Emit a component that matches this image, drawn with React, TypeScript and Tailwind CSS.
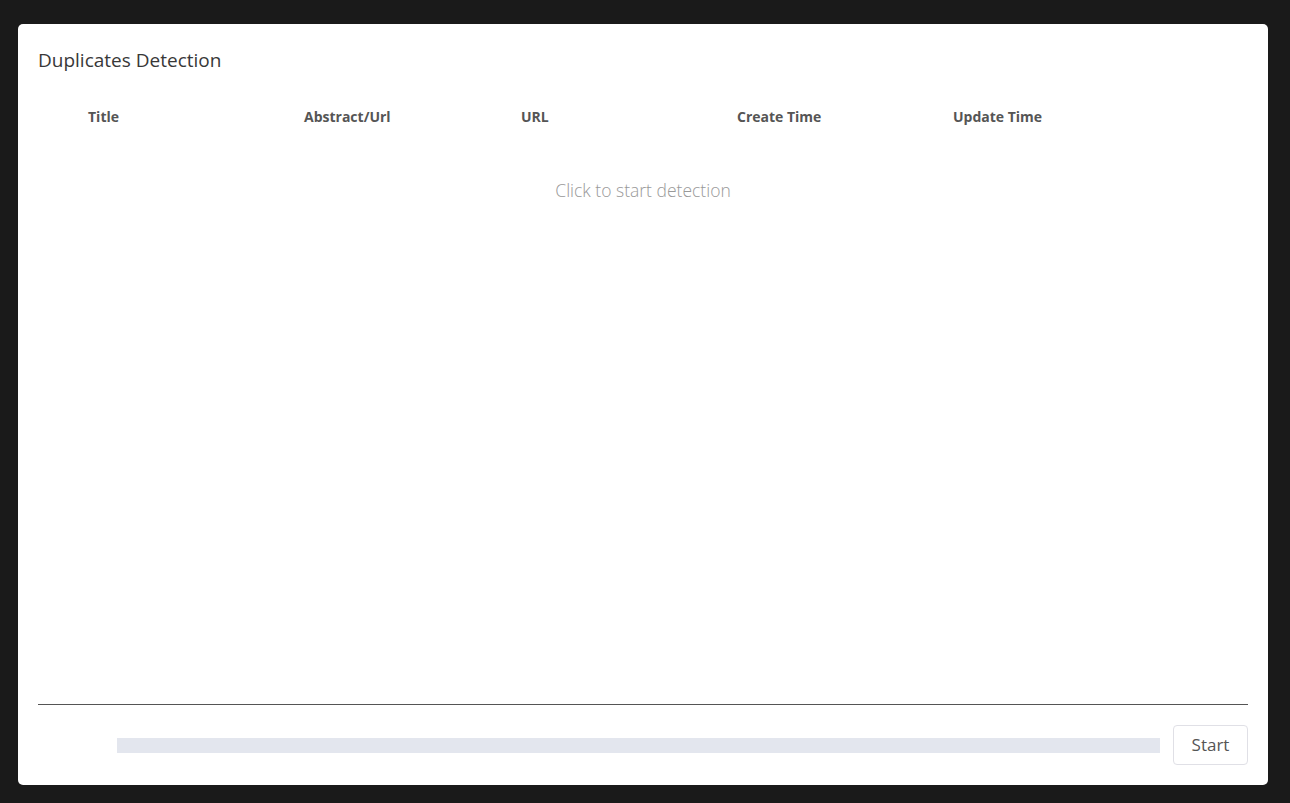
const columns = [
  { label: "Title", width: "w-[216px]" },
  { label: "Abstract/Url", width: "w-[217px]" },
  { label: "URL", width: "w-[216px]" },
  { label: "Create Time", width: "w-[216px]" },
  { label: "Update Time", width: "w-[216px]" },
];

export default function App() {
  return (
    <div className="h-[803px] w-full bg-[#1a1a1a] pl-[18px] pr-[22px] pt-[24px] pb-[18px] font-['Open_Sans','Noto_Sans',sans-serif]">
      <div className="flex h-[761px] flex-col rounded-[5px] bg-white px-5 pt-[22px] pb-5">
        <h2 className="text-[19px] leading-[28px] text-[#383838]">Duplicates Detection</h2>

        <div className="mt-[31px] flex pl-[50px] text-[14px] font-bold leading-[24px] text-[#555]">
          {columns.map((col) => (
            <div key={col.label} className={col.width}>
              {col.label}
            </div>
          ))}
        </div>

        <p className="mt-[49px] text-center text-[17.5px] font-light leading-[24px] text-[#999]">
          Click to start detection
        </p>

        <div className="flex-1" />

        <div className="h-px bg-[#555]" />

        <div className="mt-5 flex items-center">
          <div className="ml-[79px] h-[15px] flex-1 bg-[#e3e6ee]" />
          <button className="ml-[13px] h-[40px] w-[75px] rounded-[4px] border border-[#e0e0e6] text-[17px] text-[#555]">
            Start
          </button>
        </div>
      </div>
    </div>
  );
}
